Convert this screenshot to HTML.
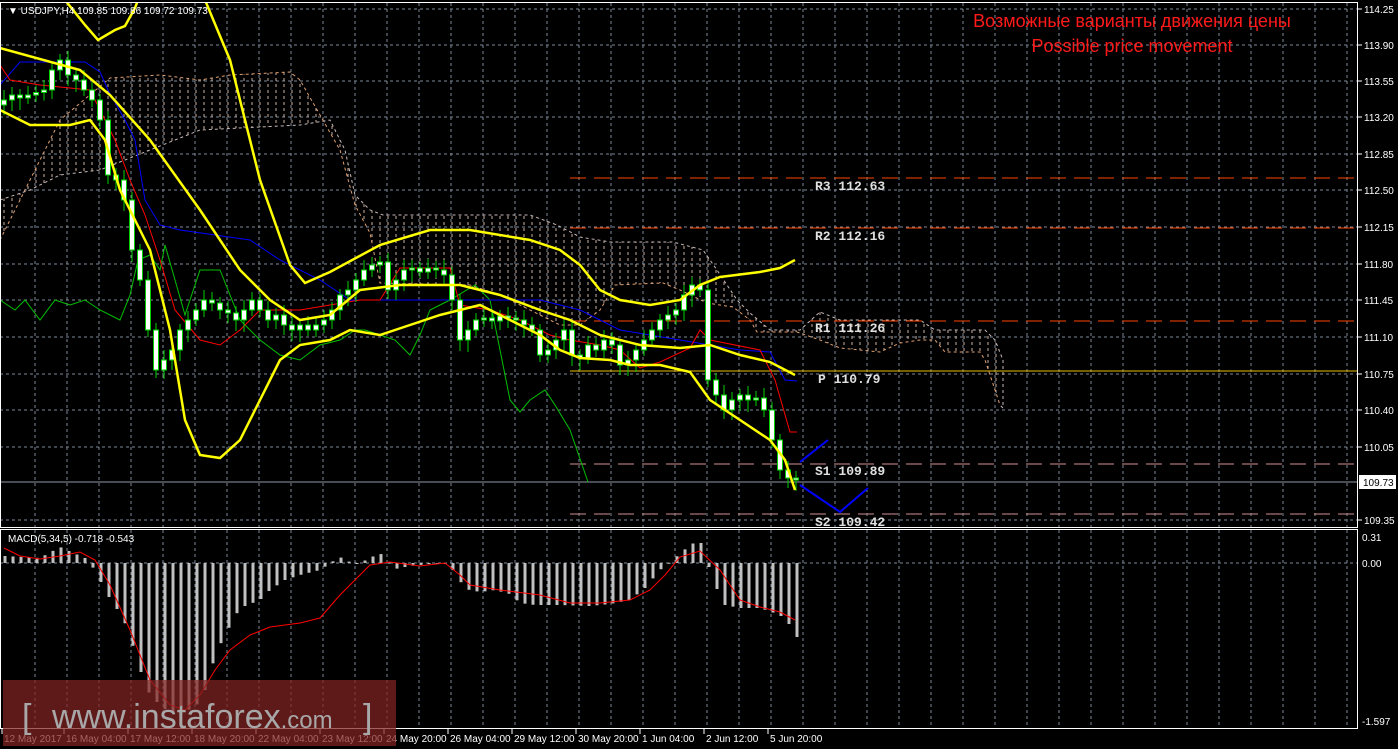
<!DOCTYPE html>
<html><head><meta charset="utf-8"><style>
html,body{margin:0;padding:0;background:#000;width:1398px;height:749px;overflow:hidden}
svg{display:block}
text{font-family:"Liberation Sans",sans-serif}
.ax{fill:#fff;font-size:10px}
.pv{fill:#e0e0e0;font-family:"Liberation Mono",monospace;font-size:13px;font-weight:bold}
</style></head><body>
<svg id="s" width="1398" height="749" xmlns="http://www.w3.org/2000/svg">
<defs>
<pattern id="hatch" width="8" height="6" patternUnits="userSpaceOnUse">
<line x1="4" y1="0" x2="4" y2="3" stroke="#c8b0a0" stroke-width="1"/>
</pattern>
<clipPath id="mc"><rect x="1" y="3" width="1357" height="524"/></clipPath>
<clipPath id="dc"><rect x="1" y="530" width="1357" height="198"/></clipPath>
</defs>
<rect width="1398" height="749" fill="#000"/>
<g id="grid" stroke="#7c8a98" stroke-width="1" stroke-dasharray="3,3"></g>
<g clip-path="url(#mc)">
<path id="cloud" fill="url(#hatch)" stroke="none" fill-rule="evenodd"/>
<polyline id="spanA" fill="none" stroke="#e0a070" stroke-dasharray="3,3"/>
<polyline id="spanB" fill="none" stroke="#c8b8b8" stroke-dasharray="3,3"/>
<line x1="570" y1="178" x2="1358" y2="178" stroke="#ff4500" stroke-dasharray="16,8" stroke-width="1"/>
<line x1="570" y1="228" x2="1358" y2="228" stroke="#ff4500" stroke-dasharray="16,8"/>
<line x1="570" y1="321" x2="1358" y2="321" stroke="#ff4500" stroke-dasharray="16,8"/>
<line x1="570" y1="371" x2="1358" y2="371" stroke="#e8c000"/>
<line x1="570" y1="464" x2="1358" y2="464" stroke="#d09090" stroke-dasharray="16,8"/>
<line x1="570" y1="514" x2="1358" y2="514" stroke="#d09090" stroke-dasharray="16,8"/>
<line x1="0" y1="482" x2="1358" y2="482" stroke="#8c9aa8"/>
<polyline id="green" fill="none" stroke="#00c000"/>
<polyline id="blue" fill="none" stroke="#0000ff"/>
<polyline id="red" fill="none" stroke="#ff0000"/>
<g id="candles"></g>
<g fill="none" stroke="#ffff00" stroke-width="2.5" id="yel"></g>
<polyline points="800,462 828,440" fill="none" stroke="#0000ff" stroke-width="2"/>
<polyline points="800,485 840,512 868,488" fill="none" stroke="#0000ff" stroke-width="2"/>
<text class="pv" x="815" y="190">R3 112.63</text>
<text class="pv" x="815" y="240">R2 112.16</text>
<text class="pv" x="815" y="332">R1 111.26</text>
<text class="pv" x="818" y="383">P 110.79</text>
<text class="pv" x="815" y="475">S1 109.89</text>
<text class="pv" x="815" y="526">S2 109.42</text>
</g>
<g clip-path="url(#dc)">
<line x1="0" y1="563" x2="1358" y2="563" stroke="#7c8a98" stroke-dasharray="3,3"/>
<g id="bars" fill="#c0c0c0"></g>
<polyline id="sig" fill="none" stroke="#ff0000"/>
</g>
<rect x="0.5" y="2.5" width="1357" height="525" fill="none" stroke="#fff"/>
<rect x="0.5" y="529.5" width="1357" height="199" fill="none" stroke="#fff"/>
<text x="8" y="14" fill="#fff" font-size="10">▼ USDJPY,H4  109.85 109.86 109.72 109.73</text>
<text x="8" y="542" fill="#fff" font-size="10">MACD(5,34,5) -0.718 -0.543</text>
<text x="1132" y="27" fill="#ff1a1a" font-size="18" text-anchor="middle">Возможные варианты движения цены</text>
<text x="1132" y="52" fill="#ff1a1a" font-size="18" text-anchor="middle">Possible price movement</text>
<g id="pax"></g>
<rect x="1359" y="475" width="37" height="14" fill="#fff"/>
<text x="1363" y="486" fill="#000" font-size="10">109.73</text>
<text class="ax" x="1362" y="541">0.31</text>
<text class="ax" x="1362" y="567">0.00</text>
<text class="ax" x="1362" y="725">-1.597</text>
<g id="tax"></g>
<rect x="3" y="680" width="393" height="66" fill="rgba(130,35,35,0.72)"/>
<text x="22" y="728" fill="#a8a8a8" font-size="34">[</text>
<text x="52" y="728" fill="#a8a8a8" font-size="34">www.instaforex<tspan font-size="24">.com</tspan></text>
<text x="363" y="728" fill="#a8a8a8" font-size="34">]</text>
</svg>
<script>
var NS="http://www.w3.org/2000/svg";
function el(t,a,p){var e=document.createElementNS(NS,t);for(var k in a)e.setAttribute(k,a[k]);(p||document.getElementById('s')).appendChild(e);return e;}
function pts(a){return a.map(function(p){return p[0]+","+p[1]}).join(" ");}
function interp(a,x){for(var i=0;i<a.length-1;i++){if(x>=a[i][0]&&x<=a[i+1][0]){var t=(x-a[i][0])/(a[i+1][0]-a[i][0]);return a[i][1]+t*(a[i+1][1]-a[i][1]);}}return a[a.length-1][1];}
var g=document.getElementById('grid');
for(var x=35;x<1358;x+=32)el('line',{x1:x,y1:3,x2:x,y2:527},g),el('line',{x1:x,y1:530,x2:x,y2:728},g);
var pl=[[9,"114.25"],[45,"113.90"],[81,"113.55"],[117,"113.20"],[154,"112.85"],[190,"112.50"],[227,"112.15"],[264,"111.80"],[300,"111.45"],[337,"111.10"],[374,"110.75"],[410,"110.40"],[447,"110.05"],[520,"109.35"]];
var pax=document.getElementById('pax');
pl.forEach(function(p){el('line',{x1:0,y1:p[0],x2:1358,y2:p[0]},g);el('line',{x1:1358,y1:p[0],x2:1362,y2:p[0],stroke:'#fff'},pax);var t=el('text',{x:1364,y:p[0]+4,'class':'ax'},pax);t.textContent=p[1];});
var tl=[[4,"12 May 2017"],[66,"16 May 04:00"],[130,"17 May 12:00"],[194,"18 May 20:00"],[258,"22 May 04:00"],[322,"23 May 12:00"],[386,"24 May 20:00"],[450,"26 May 04:00"],[514,"29 May 12:00"],[578,"30 May 20:00"],[642,"1 Jun 04:00"],[706,"2 Jun 12:00"],[770,"5 Jun 20:00"]];
var tax=document.getElementById('tax');
tl.forEach(function(p){var t=el('text',{x:p[0],y:742,'class':'ax'},tax);t.textContent=p[1];el('line',{x1:p[0]-2,y1:729,x2:p[0]-2,y2:734,stroke:'#fff'},tax);});
// cloud
var A=[[0,240],[20,200],[40,160],[60,120],[110,78],[160,75],[200,80],[230,75],[290,72],[300,80],[320,115],[340,150],[355,205],[370,233],[380,283],[470,285],[500,295],[540,315],[560,325],[580,325],[600,310],[615,285],[663,283],[680,290],[707,303],[733,307],[750,320],[757,332],[797,332],[820,340],[840,348],[880,352],[900,343],[920,340],[935,340],[945,352],[980,352],[985,360],[1000,405]];
var B=[[0,200],[30,190],[60,175],[100,170],[150,150],[200,130],[300,125],[330,120],[345,150],[355,195],[370,210],[383,215],[530,215],[557,225],[580,237],[610,242],[673,242],[703,250],[717,270],[737,300],[750,313],[770,330],[800,330],[820,312],[840,320],[920,320],[935,330],[985,330],[995,340],[1003,360],[1003,408],[1000,405]];
document.getElementById('cloud').setAttribute('d',"M"+pts(A)+" L"+pts(B.slice().reverse())+"Z");
document.getElementById('spanA').setAttribute('points',pts(A));
document.getElementById('spanB').setAttribute('points',pts(B));
document.getElementById('green').setAttribute('points',pts([[0,300],[15,310],[25,300],[40,320],[55,300],[70,305],[85,300],[100,310],[120,320],[130,295],[138,260],[150,255],[160,270],[165,245],[175,280],[185,315],[200,270],[220,270],[240,320],[260,340],[280,355],[300,360],[320,345],[340,340],[355,330],[365,330],[380,335],[395,340],[410,355],[420,335],[430,310],[450,300],[475,285],[490,300],[500,350],[510,400],[520,412],[530,400],[545,390],[555,405],[570,430],[588,482]]));
document.getElementById('blue').setAttribute('points',pts([[0,85],[20,62],[85,62],[100,72],[108,90],[125,120],[135,140],[145,200],[160,225],[180,230],[250,240],[280,260],[320,280],[350,300],[480,300],[540,300],[560,305],[580,310],[600,320],[620,330],[650,335],[680,340],[710,345],[740,350],[770,352],[785,380],[797,381]]));
document.getElementById('red').setAttribute('points',pts([[0,65],[10,80],[40,85],[70,88],[90,90],[100,110],[115,140],[130,180],[145,215],[160,260],[175,310],[200,340],[220,345],[240,330],[260,310],[300,310],[330,305],[360,300],[380,300],[400,268],[450,268],[460,305],[490,310],[520,320],[550,335],[570,340],[600,345],[620,350],[640,368],[660,362],[690,348],[700,330],[710,340],[760,350],[775,380],[790,432],[797,432]]));
var yel=document.getElementById('yel');
[[[65,0],[85,25],[98,40],[115,30],[125,26],[135,8],[138,0]],
[[205,0],[230,60],[260,180],[290,265],[305,283],[330,272],[380,245],[430,230],[470,230],[530,240],[560,250],[580,265],[600,290],[620,300],[650,305],[680,300],[700,285],[720,277],[760,272],[780,268],[795,260]],
[[0,48],[80,70],[110,95],[150,140],[200,210],[240,270],[270,300],[300,320],[330,315],[360,290],[400,285],[460,285],[500,295],[540,310],[570,320],[600,335],[640,345],[680,348],[710,345],[740,355],[770,362],[795,375]],
[[0,110],[30,125],[70,125],[90,120],[105,140],[120,190],[150,250],[170,330],[185,420],[200,455],[220,458],[240,440],[260,400],[280,360],[300,345],[330,340],[350,330],[380,335],[410,325],[440,315],[480,305],[510,320],[540,335],[560,350],[580,358],[610,360],[630,365],[660,365],[690,372],[710,400],[740,420],[770,440],[785,460],[795,490]]
].forEach(function(a){el('polyline',{points:pts(a)},yel);});
var C=[[4,100],[12,95],[28,95],[44,90],[52,70],[60,60],[68,75],[76,80],[84,90],[92,100],[100,120],[108,175],[116,180],[124,200],[132,250],[140,280],[148,330],[156,370],[164,360],[172,350],[180,330],[188,320],[196,310],[204,300],[212,300],[220,310],[228,310],[236,320],[244,310],[252,300],[260,310],[268,320],[276,315],[284,325],[292,330],[300,325],[308,330],[316,325],[324,320],[332,310],[340,295],[348,290],[356,280],[364,270],[372,265],[380,262],[388,290],[396,280],[404,270],[412,268],[420,272],[428,268],[436,270],[444,275],[452,300],[460,340],[468,330],[476,320],[484,318],[492,318],[500,316],[508,318],[516,320],[524,325],[532,330],[540,355],[548,350],[556,340],[564,330],[572,355],[580,355],[588,345],[596,350],[604,340],[612,345],[620,365],[628,360],[636,350],[644,340],[652,330],[660,320],[668,315],[676,310],[684,295],[692,285],[700,290],[708,380],[716,395],[724,410],[732,400],[740,395],[748,400],[756,398],[764,410],[772,440],[780,470],[788,478],[796,480]];
var cg=document.getElementById('candles');var prev=105;
for(var x=4;x<=796;x+=8){var c=interp(C,x);var o=prev;if(Math.abs(c-o)<2)c=o+((x/8)%2?3:-3);var t=Math.min(o,c),b=Math.max(o,c);
el('line',{x1:x,y1:t-6-(x%5),x2:x,y2:b+6+(x%7),stroke:'#00d000'},cg);
el('rect',{x:x-2.5,y:t,width:5,height:Math.max(2,b-t),fill:'#fff',stroke:'#00d000'},cg);prev=c;}
var M=[[5,556],[40,558],[60,547],[85,558],[95,570],[107,594],[123,618],[131,639],[139,666],[147,690],[155,700],[163,708],[170,712],[180,712],[195,708],[205,690],[212,666],[220,645],[227,632],[235,615],[245,606],[260,600],[270,590],[285,580],[300,575],[320,570],[335,560],[345,556],[350,563],[360,563],[380,553],[395,569],[410,566],[430,564],[445,563],[455,572],[465,589],[480,592],[495,590],[510,594],[520,603],[535,605],[560,605],[590,606],[610,604],[630,600],[645,588],[660,570],[675,558],[690,545],[700,540],[705,555],[715,585],[725,605],[740,608],[760,608],[780,615],[790,625],[797,637]];
var bg=document.getElementById('bars');
for(var x=5;x<=797;x+=8){var v=interp(M,x);var t=Math.min(v,563),h=Math.abs(v-563);if(h<1)h=1;el('rect',{x:x-1.5,y:t,width:3,height:h},bg);}
document.getElementById('sig').setAttribute('points',pts([[4,548],[20,556],[40,559],[60,556],[80,552],[95,560],[110,585],[130,630],[150,680],[170,705],[185,710],[200,695],[215,670],[230,650],[250,635],[270,627],[300,623],[320,618],[340,595],[355,580],[370,565],[390,562],[420,566],[445,563],[460,575],[470,585],[500,590],[540,595],[570,603],[600,603],[630,600],[650,590],[665,575],[680,557],[700,551],[720,570],[740,600],[760,607],[780,612],[795,620]]));
</script>
</body></html>
